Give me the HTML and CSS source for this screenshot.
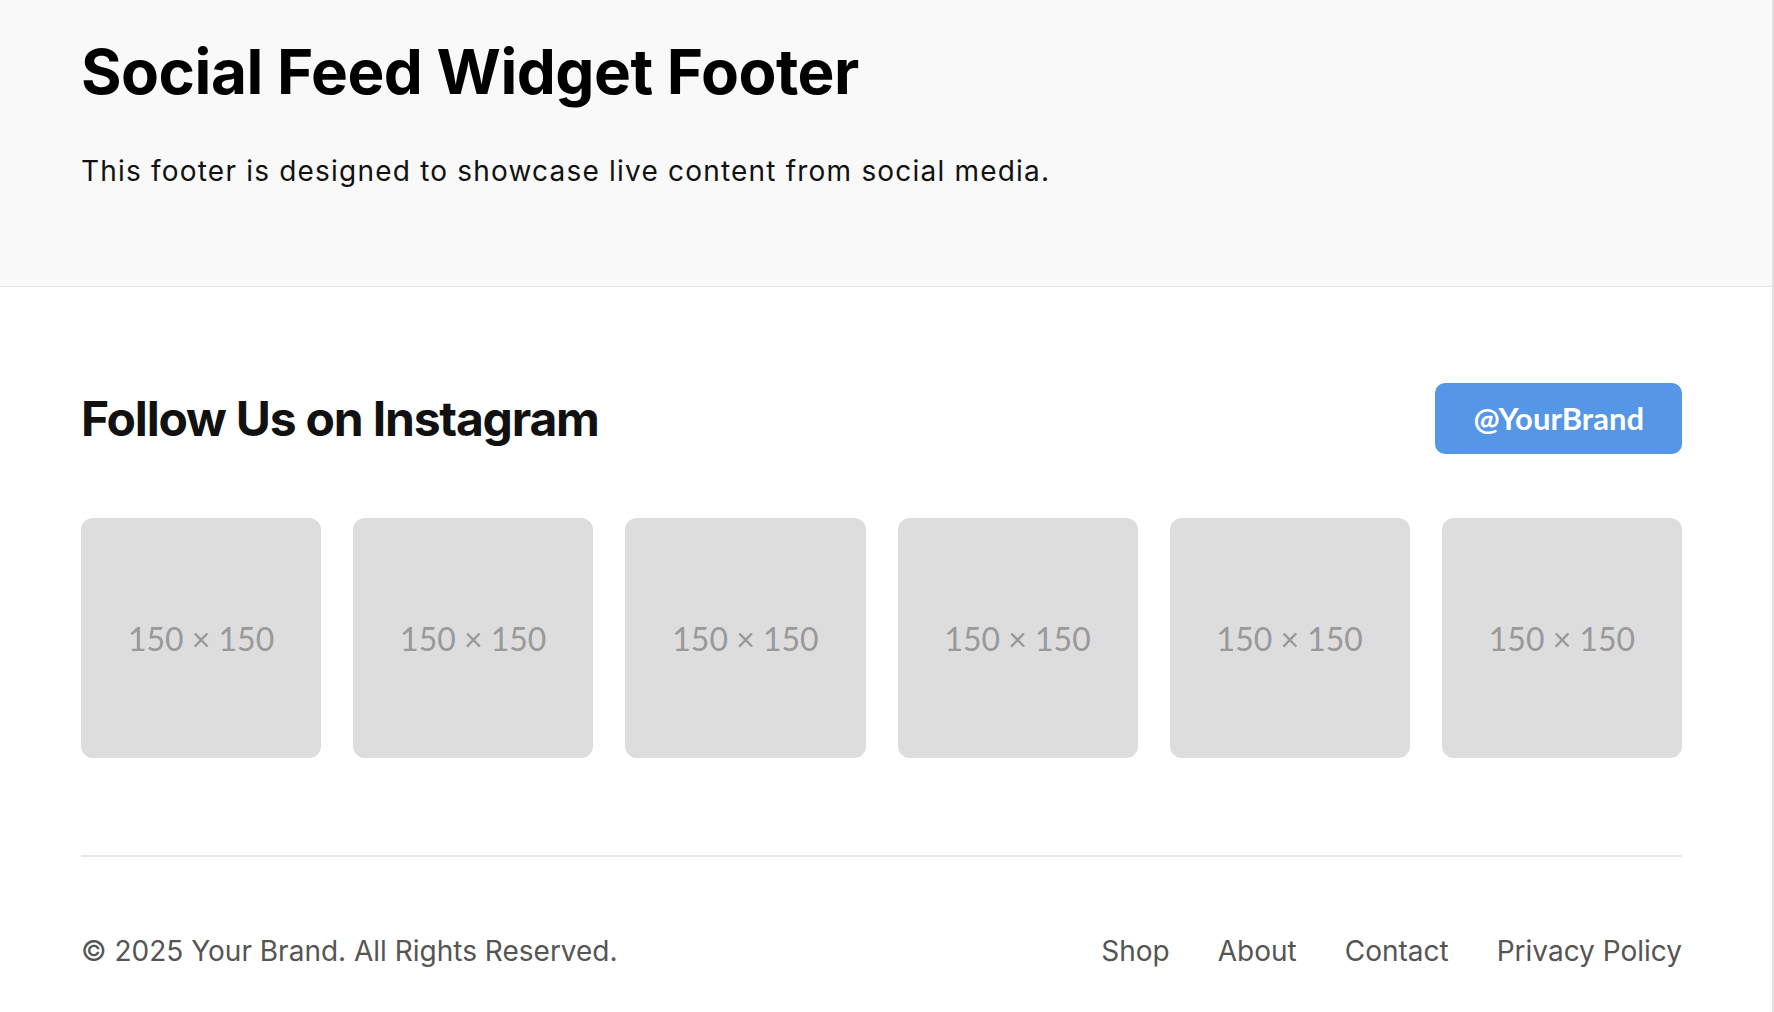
FILE: index.html
```html
<!DOCTYPE html>
<html lang="en">
<head>
<meta charset="utf-8">
<title>Social Feed Widget Footer</title>
<link rel="stylesheet" href="styles.css">
</head>
<body>
<header class="hero">
  <div class="container">
    <h1 class="hero-title">Social Feed Widget Footer</h1>
    <p class="hero-text">This footer is designed to showcase live content from social media.</p>
  </div>
</header>
<footer class="site-footer">
  <div class="container">
    <div class="feed-head">
      <h2 class="feed-title">Follow Us on Instagram</h2>
      <a class="follow-btn" href="#">@YourBrand</a>
    </div>
    <div class="feed-grid">
      <div class="tile">150 × 150</div>
      <div class="tile">150 × 150</div>
      <div class="tile">150 × 150</div>
      <div class="tile">150 × 150</div>
      <div class="tile">150 × 150</div>
      <div class="tile">150 × 150</div>
    </div>
    <div class="footer-bottom">
      <p class="copyright">© 2025 Your Brand. All Rights Reserved.</p>
      <nav class="footer-links">
        <a href="#">Shop</a>
        <a href="#">About</a>
        <a href="#">Contact</a>
        <a href="#">Privacy Policy</a>
      </nav>
    </div>
  </div>
</footer>
</body>
</html>
```
FILE: styles.css
```css
* { box-sizing: border-box; }
html { background: #ffffff; }
body {
  margin: 0;
  font-family: Inter, "Noto Sans", sans-serif;
  color: #000;
  background: #fff;
  border-right: 2px solid #e2e2e2;
  min-height: 100vh;
}
.container {
  width: 1601px;
  margin-left: 81px;
}
.hero {
  background: #f9f9f9;
  border-bottom: 1px solid #e5e5e5;
  padding: 35px 0 94px;
}
.hero-title {
  margin: 0;
  font-size: 62px;
  line-height: 1.2;
  font-weight: 700;
  letter-spacing: -0.5px;
}
.hero-text {
  margin: 41px 0 0;
  font-size: 28px;
  line-height: 1.5;
  color: #111;
  letter-spacing: 1.2px;
}
.site-footer {
  padding-top: 96px;
}
.feed-head {
  display: flex;
  align-items: center;
  justify-content: space-between;
}
.feed-title {
  margin: 0;
  font-size: 48px;
  line-height: 1.2;
  font-weight: 700;
  color: #111;
  letter-spacing: -1.2px;
}
.follow-btn {
  display: block;
  background: #5596e6;
  color: #fff;
  text-decoration: none;
  font-family: Lato, Inter, sans-serif;
  font-weight: 700;
  font-size: 31px;
  line-height: 35px;
  padding: 18px 38px;
  border-radius: 10px;
}
.feed-grid {
  display: flex;
  gap: 32px;
  margin-top: 64px;
}
.tile {
  flex: 1;
  height: 240px;
  background: #dddddd;
  border-radius: 12px;
  display: flex;
  align-items: center;
  justify-content: center;
  font-family: Lato, sans-serif;
  font-size: 32px;
  color: #999;
}
.footer-bottom {
  margin-top: 97px;
  border-top: 2px solid #e8e8e8;
  padding-top: 73px;
  display: flex;
  justify-content: space-between;
  align-items: center;
  padding-bottom: 60px;
}
.copyright {
  margin: 0;
  font-size: 28px;
  line-height: 1.5;
  color: #555;
}
.footer-links {
  display: flex;
  gap: 48px;
}
.footer-links a {
  font-size: 28px;
  line-height: 1.5;
  color: #555;
  text-decoration: none;
}
```
